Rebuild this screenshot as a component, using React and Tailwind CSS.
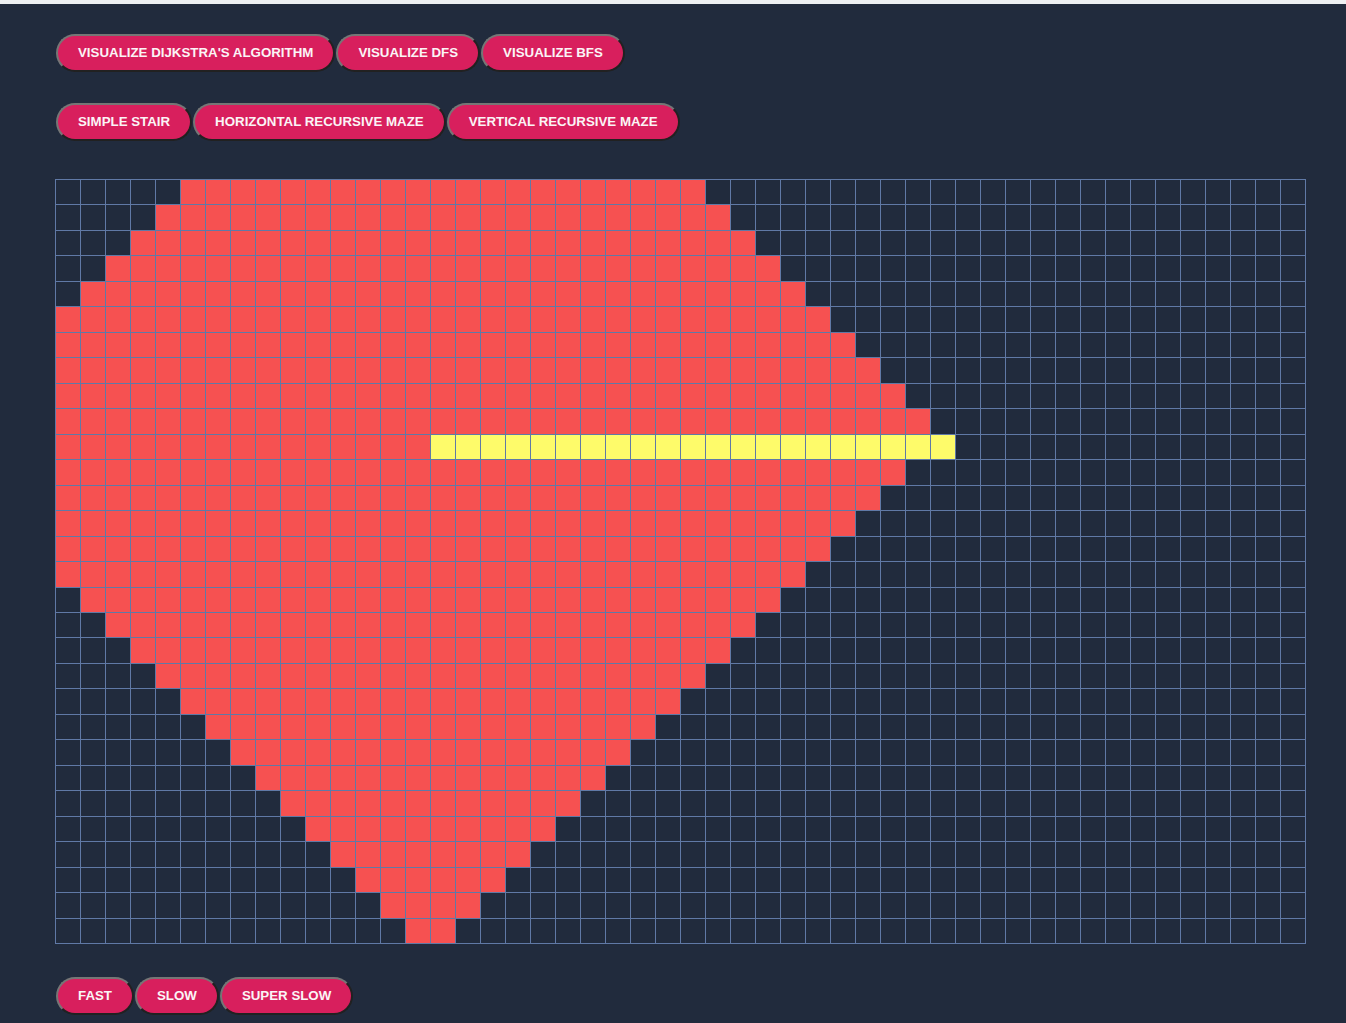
import React from "react";

const ROWS = 30;
const COLS = 50;

// visited area of the search, read row by row
const cellState = (r, c) => {
  if (r === 10) {
    if (c >= 15 && c <= 35) return "path";
    if (c < 15) return "visited";
    return "empty";
  }
  let left;
  let right;
  if (r < 10) {
    left = Math.max(0, 5 - r);
    right = 25 + r;
  } else {
    left = Math.max(0, r - 15);
    right = 44 - r;
  }
  return c >= left && c <= right ? "visited" : "empty";
};

const Btn = ({ children }) => (
  <button className="h-[38px] px-5 rounded-full border-2 [border-style:outset] border-[#767676] bg-[#d81f5d] text-[#fbf4f6] text-[13.3px] font-bold uppercase whitespace-nowrap leading-none">
    {children}
  </button>
);

const App = () => {
  const cells = [];
  for (let r = 0; r < ROWS; r++) {
    for (let c = 0; c < COLS; c++) {
      const s = cellState(r, c);
      cells.push(
        <div
          key={r + "-" + c}
          className={
            s === "path"
              ? "bg-[#fefb6a]"
              : s === "visited"
              ? "bg-[#f65151]"
              : "bg-[#212b3d]"
          }
        />
      );
    }
  }

  return (
    <div className="min-h-[1023px] bg-[#212b3d] font-['Liberation_Sans',Arial,sans-serif]">
      <div className="h-[4px] bg-[#eef0f2]" />
      <div className="pl-[56px] pt-[30px] flex gap-px">
        <Btn>Visualize Dijkstra's Algorithm</Btn>
        <Btn>Visualize DFS</Btn>
        <Btn>Visualize BFS</Btn>
      </div>
      <div className="pl-[56px] pt-[31px] flex gap-px">
        <Btn>Simple Stair</Btn>
        <Btn>Horizontal Recursive Maze</Btn>
        <Btn>Vertical Recursive Maze</Btn>
      </div>
      <div className="pl-[55px] pt-[38px]">
        <div className="grid w-fit grid-cols-[repeat(50,24px)] auto-rows-[24.47px] gap-px bg-[#6079a6] border border-[#6079a6]">
          {cells}
        </div>
      </div>
      <div className="pl-[56px] pt-[33px] flex gap-px">
        <Btn>Fast</Btn>
        <Btn>Slow</Btn>
        <Btn>Super Slow</Btn>
      </div>
    </div>
  );
};

export default App;
